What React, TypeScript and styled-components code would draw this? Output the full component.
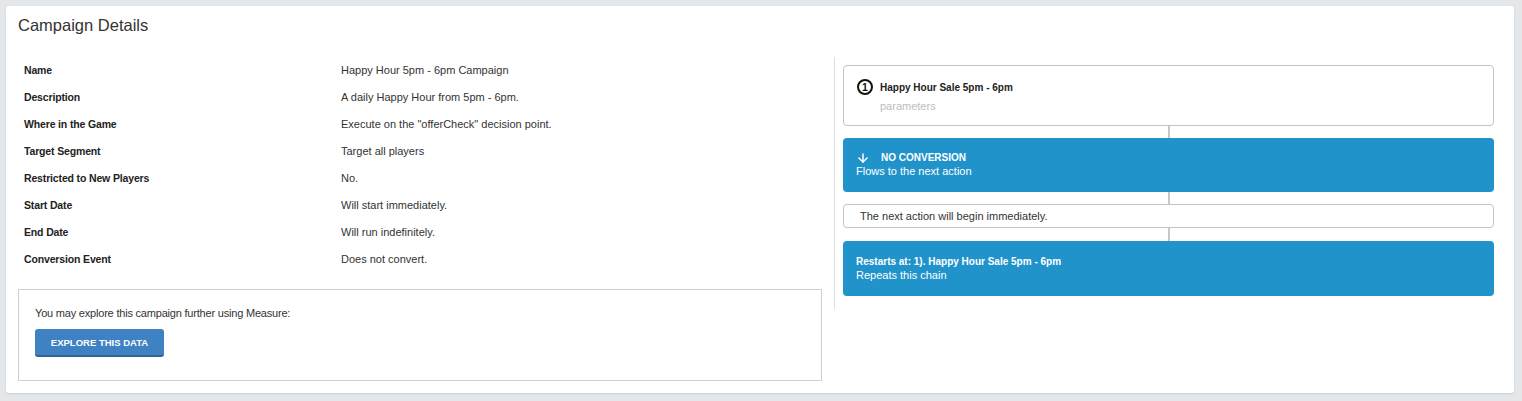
import React from 'react';
import styled, { createGlobalStyle } from 'styled-components';
import { ArrowDown } from 'lucide-react';

const GlobalStyle = createGlobalStyle`
  html, body {
    margin: 0;
    padding: 0;
    background: #e3e7ea;
    font-family: "Liberation Sans", Arial, sans-serif;
    color: #333;
  }
`;

const Page = styled.div`
  padding: 6px 8px 9px 6px;
`;

const Card = styled.div`
  background: #fff;
  border-radius: 3px;
  box-shadow: 0 1px 2px rgba(0, 0, 0, 0.12);
  padding: 0 0 12px 12px;
`;

const Header = styled.div`
  height: 51px;
  display: flex;
  align-items: flex-start;
  padding-top: 9px;
  box-sizing: border-box;
`;

const Title = styled.h2`
  margin: 0;
  font-size: 16.5px;
  font-weight: normal;
  line-height: 20px;
  color: #333;
`;

const Body = styled.div`
  display: flex;
  align-items: flex-start;
`;

const LeftColumn = styled.div`
  width: 804px;
  flex-shrink: 0;
`;

const DetailsTable = styled.table`
  border-collapse: collapse;
  margin: -1px 0 0 6px;
`;

const Label = styled.td`
  width: 317px;
  height: 27px;
  padding: 0;
  font-size: 10.5px;
  font-weight: bold;
  letter-spacing: -0.15px;
  color: #222;
  vertical-align: middle;
`;

const Value = styled.td`
  height: 27px;
  padding: 0;
  font-size: 11px;
  color: #333;
  vertical-align: middle;
`;

const ExploreBox = styled.div`
  margin-top: 17px;
  border: 1px solid #cfcfcf;
  padding: 16px 16px 23px;
`;

const ExploreText = styled.p`
  margin: 0;
  font-size: 11px;
  line-height: 14px;
  letter-spacing: -0.2px;
  color: #333;
`;

const ExploreButton = styled.button`
  margin-top: 9px;
  width: 129px;
  height: 28px;
  border: none;
  border-bottom: 2px solid #2e6399;
  border-radius: 3px;
  background: #3e82c4;
  color: #fff;
  font-family: "Liberation Sans", Arial, sans-serif;
  font-size: 9.5px;
  font-weight: bold;
  padding: 0;
  cursor: pointer;
`;

const FlowColumn = styled.div`
  flex: 1;
  margin-left: 12px;
  border-left: 1px solid #dedede;
  padding: 8px 20px 13px 8px;
  display: flex;
  flex-direction: column;
`;

const Connector = styled.div<{ $h?: number }>`
  align-self: center;
  width: 2px;
  height: ${(p) => p.$h ?? 12}px;
  background: #c8c8c8;
`;

const ActionCard = styled.div`
  border: 1px solid #c4c4c4;
  border-radius: 4px;
  padding: 13px 14px 14px;
  height: 61px;
  box-sizing: border-box;
`;

const ActionHead = styled.div`
  display: flex;
  align-items: center;
  gap: 7px;
`;

const StepNumber = styled.span`
  width: 16px;
  height: 16px;
  margin-left: -1px;
  box-sizing: border-box;
  border: 2px solid #111;
  border-radius: 50%;
  display: flex;
  align-items: center;
  justify-content: center;
  font-size: 10.5px;
  font-weight: bold;
  color: #111;
`;

const ActionTitle = styled.span`
  font-size: 10px;
  font-weight: bold;
  color: #222;
`;

const ActionSub = styled.div`
  margin: 5px 0 0 22px;
  font-size: 11px;
  color: #bdbdbd;
`;

const BlueBox = styled.div<{ $tall?: boolean }>`
  background: #2193cb;
  border-radius: 4px;
  color: #fff;
  padding: ${(p) => (p.$tall ? '13px 13px 14px' : '12px 13px 14px')};
`;

const BlueHead = styled.div`
  display: flex;
  align-items: center;
  gap: 11px;
  height: 14px;
  font-size: 10px;
  font-weight: bold;
  svg {
    margin-top: 1px;
  }
`;

const BlueText = styled.div`
  font-size: 11px;
  line-height: 14px;
`;

const NoteBox = styled.div`
  border: 1px solid #c4c4c4;
  border-radius: 4px;
  height: 24px;
  box-sizing: border-box;
  padding: 0 16px;
  display: flex;
  align-items: center;
  font-size: 11px;
  color: #333;
`;

const details: [string, string][] = [
  ['Name', 'Happy Hour 5pm - 6pm Campaign'],
  ['Description', 'A daily Happy Hour from 5pm - 6pm.'],
  ['Where in the Game', 'Execute on the "offerCheck" decision point.'],
  ['Target Segment', 'Target all players'],
  ['Restricted to New Players', 'No.'],
  ['Start Date', 'Will start immediately.'],
  ['End Date', 'Will run indefinitely.'],
  ['Conversion Event', 'Does not convert.'],
];

export default function App() {
  return (
    <>
      <GlobalStyle />
      <Page>
        <Card>
          <Header>
            <Title>Campaign Details</Title>
          </Header>
          <Body>
            <LeftColumn>
              <DetailsTable>
                <tbody>
                  {details.map(([label, value]) => (
                    <tr key={label}>
                      <Label>{label}</Label>
                      <Value>{value}</Value>
                    </tr>
                  ))}
                </tbody>
              </DetailsTable>
              <ExploreBox>
                <ExploreText>You may explore this campaign further using Measure:</ExploreText>
                <ExploreButton>EXPLORE THIS DATA</ExploreButton>
              </ExploreBox>
            </LeftColumn>

            <FlowColumn>
              <ActionCard>
                <ActionHead>
                  <StepNumber>1</StepNumber>
                  <ActionTitle>Happy Hour Sale 5pm - 6pm</ActionTitle>
                </ActionHead>
                <ActionSub>parameters</ActionSub>
              </ActionCard>
              <Connector />
              <BlueBox>
                <BlueHead>
                  <ArrowDown size={14} strokeWidth={2.6} />
                  NO CONVERSION
                </BlueHead>
                <BlueText>Flows to the next action</BlueText>
              </BlueBox>
              <Connector />
              <NoteBox>The next action will begin immediately.</NoteBox>
              <Connector $h={13} />
              <BlueBox $tall>
                <BlueHead>Restarts at: 1). Happy Hour Sale 5pm - 6pm</BlueHead>
                <BlueText>Repeats this chain</BlueText>
              </BlueBox>
            </FlowColumn>
          </Body>
        </Card>
      </Page>
    </>
  );
}
